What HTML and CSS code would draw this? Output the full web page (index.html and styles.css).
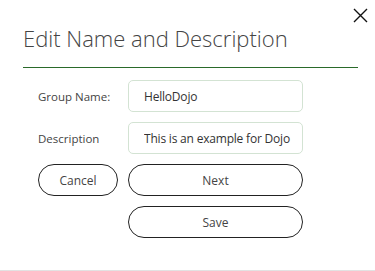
FILE: index.html
```html
<!DOCTYPE html>
<html>
<head>
<meta charset="utf-8">
<link rel="stylesheet" href="styles.css">
</head>
<body>
<div class="dialog">
  <button class="close" aria-label="Close">
    <svg width="15" height="15" viewBox="0 0 15 15"><path d="M1 1L14 14M14 1L1 14" stroke="#111" stroke-width="1.4" fill="none"/></svg>
  </button>
  <div class="header">
    <h1 class="title">Edit Name and Description</h1>
  </div>
  <form class="form">
    <label class="label">Group Name:</label>
    <input class="input" type="text" value="HelloDojo">
    <label class="label">Description</label>
    <input class="input" type="text" value="This is an example for Dojo">
    <button type="button" class="btn btn-cancel">Cancel</button>
    <button type="button" class="btn">Next</button>
    <span></span>
    <button type="button" class="btn">Save</button>
  </form>
</div>
</body>
</html>
```
FILE: styles.css
```css
html, body {
  margin: 0;
  padding: 0;
  background: #fff;
}
body {
  font-family: "Open Sans", "Noto Sans", sans-serif;
  color: #333;
  width: 375px;
  height: 271px;
  overflow: hidden;
}
.dialog {
  position: relative;
  height: 270px;
  border-bottom: 1px solid #e2e2e2;
  padding: 0 17px 0 23px;
}
.close {
  position: absolute;
  top: 8px;
  right: 7px;
  width: 15px;
  height: 15px;
  padding: 0;
  border: 0;
  background: none;
}
.close svg { display: block; }
.header {
  box-sizing: border-box;
  height: 68px;
  padding-top: 23px;
  border-bottom: 1px solid #2a6a2a;
}
.title {
  margin: 0;
  font-size: 22px;
  font-weight: 300;
  color: #444;
  line-height: 30px;
}
.form {
  display: grid;
  grid-template-columns: 90px 175px;
  grid-auto-rows: 32px;
  row-gap: 10px;
  margin: 12px 0 0 15px;
  align-items: center;
}
.label {
  font-size: 11.5px;
  color: #444;
}
.input {
  box-sizing: border-box;
  height: 32px;
  width: 175px;
  border: 1px solid #d3e3d3;
  border-radius: 5px;
  padding: 0 0 0 15px;
  font-family: inherit;
  font-size: 12px;
  letter-spacing: -0.2px;
  color: #333;
  outline: none;
}
.btn {
  box-sizing: border-box;
  height: 32px;
  border: 1px solid #222;
  border-radius: 16px;
  background: #fff;
  font-family: inherit;
  font-size: 12px;
  color: #444;
  padding: 0;
}
.btn-cancel {
  width: 80px;
}
```
